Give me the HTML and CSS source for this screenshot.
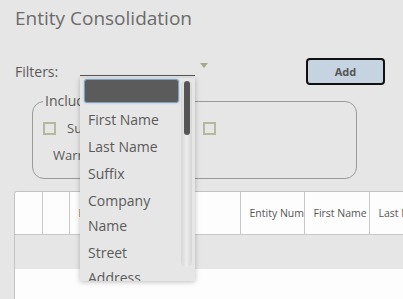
FILE: index.html
```
<!DOCTYPE html>
<html lang="en">
<head>
    <meta charset="UTF-8">
    <meta name="viewport" content="width=device-width, initial-scale=1.0">
    <title>Entity Consolidation</title>
    <link rel="stylesheet" href="styles.css">
</head>
<body>
    <div class="page">
        <h1 class="page-title">Entity Consolidation</h1>

        <div class="filter-row">
            <span class="filter-label">Filters:</span>
            <div class="filter-select">
                <ul class="dropdown">
                    <li class="dropdown-item selected"></li>
                    <li class="dropdown-item">First Name</li>
                    <li class="dropdown-item">Last Name</li>
                    <li class="dropdown-item">Suffix</li>
                    <li class="dropdown-item">Company Name</li>
                    <li class="dropdown-item">Street Address</li>
                    <li class="dropdown-item">City</li>
                </ul>
                <div class="scrollbar"><div class="scroll-thumb"></div></div>
            </div>
            <span class="select-arrow"></span>
            <button type="button" class="add-button">Add</button>
        </div>

        <fieldset class="include-box">
            <legend>Include</legend>
            <div class="option-row">
                <label class="option first"><span class="check"></span>Suggested</label>
                <label class="option"><span class="check"></span></label>
            </div>
            <div class="option-note">Warnings</div>
        </fieldset>

        <div class="grid">
            <table class="grid-table">
                <colgroup>
                    <col style="width: 27px">
                    <col style="width: 27px">
                    <col style="width: 171px">
                    <col style="width: 64px">
                    <col style="width: 65px">
                    <col style="width: 80px">
                </colgroup>
                <thead>
                    <tr>
                        <th></th>
                        <th></th>
                        <th>Entity Type</th>
                        <th>Entity Number</th>
                        <th>First Name</th>
                        <th>Last Name</th>
                    </tr>
                </thead>
            </table>
            <div class="grid-band"></div>
            <div class="grid-body"></div>
        </div>
    </div>
</body>
</html>
```

FILE: styles.css
```
body {
    margin: 0;
    background: #e6e6e6;
    font-family: "Open Sans", Arial, sans-serif;
    color: #5a5a5a;
    overflow: hidden;
}

.page {
    padding: 5px 15px 0 15px;
}

.page-title {
    margin: 0;
    font-size: 19px;
    font-weight: normal;
    line-height: 26px;
    color: #6b6b6b;
}

.filter-row {
    display: flex;
    align-items: flex-start;
    margin-top: 27px;
    height: 27px;
}

.filter-label {
    width: 65px;
    font-size: 14px;
    line-height: 27px;
    color: #5a5a5a;
}

.filter-select {
    position: relative;
    width: 115px;
    margin-top: 17px;
    border-bottom: 1px solid #555;
}

.select-arrow {
    width: 0;
    height: 0;
    margin: 5px 0 0 5px;
    border-left: 4px solid transparent;
    border-right: 4px solid transparent;
    border-top: 5px solid #a5aa8c;
}

.add-button {
    margin-left: auto;
    margin-right: 3px;
    width: 79px;
    height: 27px;
    background: #c6d3e1;
    border: 2px solid #111;
    border-radius: 4px;
    font-family: "Open Sans", Arial, sans-serif;
    font-size: 11px;
    font-weight: bold;
    color: #555;
    cursor: pointer;
}

.dropdown {
    position: absolute;
    top: 3px;
    left: 0;
    z-index: 5;
    width: 115px;
    height: 203px;
    margin: 0;
    padding: 1px 0 0 0;
    box-sizing: border-box;
    list-style: none;
    overflow: hidden;
    background: #e6e6e6;
    box-shadow: 0 1px 5px rgba(0, 0, 0, 0.25);
}

.dropdown-item {
    padding: 1px 17px 1px 8px;
    font-size: 14px;
    line-height: 25px;
    color: #5a5a5a;
}

.dropdown-item.selected {
    height: 24px;
    margin: 0 16px 3px 4px;
    padding: 0;
    box-sizing: border-box;
    background: #5b5b5b;
    border: 1px solid #7da2c6;
    border-radius: 3px;
    box-shadow: 0 0 2px rgba(90, 140, 190, 0.6);
}

.scrollbar {
    position: absolute;
    top: 5px;
    left: 101px;
    z-index: 6;
    width: 11px;
    height: 187px;
    border-radius: 6px;
    background: linear-gradient(to right, #d6d6d6, #ececec 50%, #d6d6d6);
}

.scroll-thumb {
    width: 6px;
    height: 54px;
    margin: 1px auto 0 auto;
    border-radius: 3px;
    background: #555;
}

.include-box {
    margin: 6px 0 0 17px;
    width: 325px;
    min-width: 0;
    height: 88px;
    padding: 9px 10px 0 10px;
    box-sizing: border-box;
    border: 1px solid #9a9a9a;
    border-radius: 12px;
}

.include-box legend {
    padding: 0 2px;
    font-size: 14px;
    line-height: 20px;
    color: #5a5a5a;
}

.option-row {
    display: flex;
    align-items: center;
    height: 16px;
}

.option {
    display: flex;
    align-items: center;
    font-size: 13px;
    color: #5a5a5a;
    white-space: nowrap;
}

.option.first {
    width: 160px;
}

.check {
    width: 9px;
    height: 9px;
    margin-right: 11px;
    border: 2px solid #b5b89a;
}

.option-note {
    margin: 10px 0 0 10px;
    font-size: 13px;
    line-height: 18px;
}

.grid {
    margin: 12px 0 0 -1px;
    width: 400px;
    height: 120px;
    background: #fdfdfd;
    border-left: 1px solid #c2c2c2;
    border-top: 1px solid #c2c2c2;
    border-top-left-radius: 3px;
    overflow: hidden;
}

.grid-table {
    border-collapse: collapse;
    table-layout: fixed;
    width: 434px;
    background: #fdfdfd;
}

.grid-table th {
    height: 42px;
    padding: 0 0 0 9px;
    border-right: 1px solid #c8c8c8;
    border-bottom: 1px solid #c8c8c8;
    font-size: 10.5px;
    font-weight: normal;
    text-align: left;
    color: #555;
    white-space: nowrap;
    overflow: hidden;
}

.grid-band {
    height: 34px;
    background: #e6e6e6;
}

.grid-body {
    height: 60px;
    background: #fdfdfd;
}
```
